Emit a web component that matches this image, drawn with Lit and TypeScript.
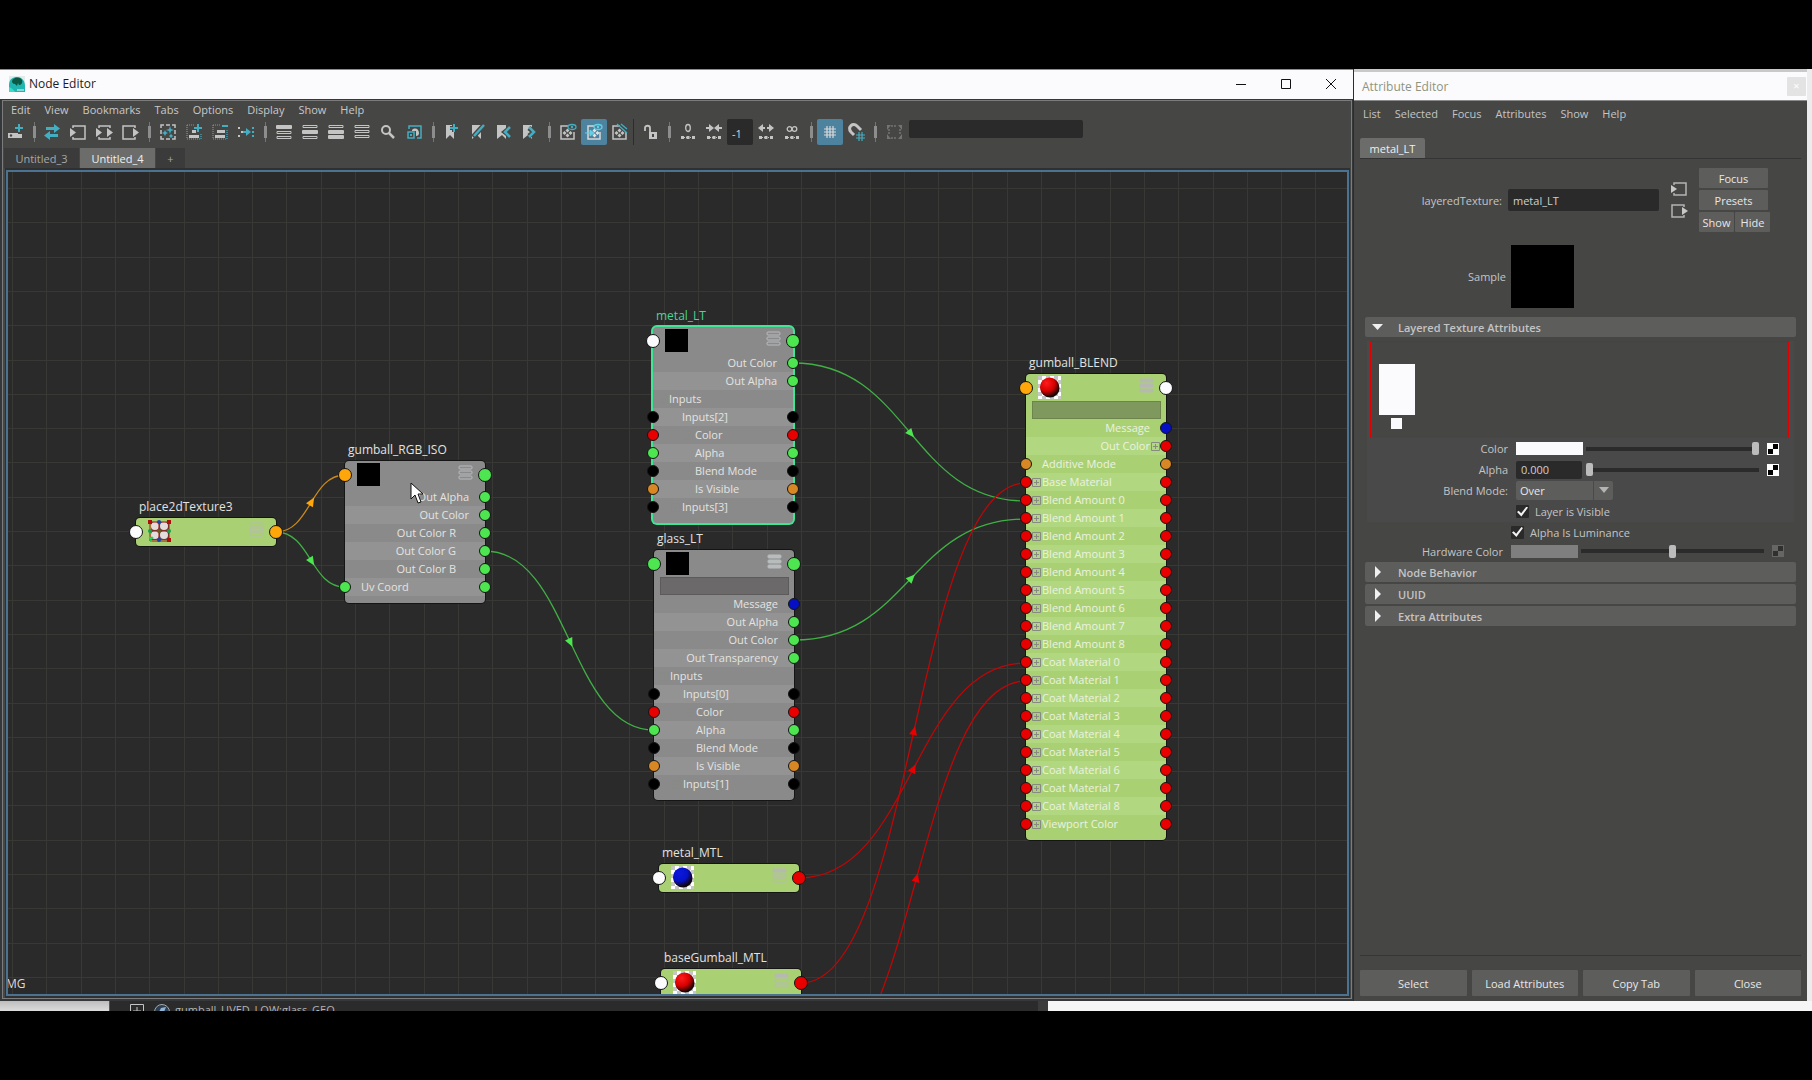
import { LitElement, html, svg, css, nothing } from "lit";
import { customElement, property } from "lit/decorators.js";
import { classMap } from "lit/directives/class-map.js";

type Tone = "green" | "red" | "black" | "blue" | "amber" | "orange" | "white";

interface Row {
  text: string;
  side: "in" | "out";
  depth?: number;
  left?: Tone;
  right?: Tone;
  plus?: boolean;
  faint?: boolean;
}

interface GraphNode {
  name: string;
  x: number;
  y: number;
  kind: "gray" | "lime";
  swatch: "black" | "red" | "blue" | "placement";
  left: Tone;
  right: Tone;
  bars: "open" | "half" | "full" | "dim";
  selected?: boolean;
  filter?: boolean;
  rows: Row[];
}

const layerRows = (first: string, last: string): Row[] => [
  { text: "Inputs", side: "in", plus: true, faint: true },
  { text: first, side: "in", depth: 1, left: "black", right: "black" },
  { text: "Color", side: "in", depth: 2, left: "red", right: "red", plus: true, faint: true },
  { text: "Alpha", side: "in", depth: 2, left: "green", right: "green" },
  { text: "Blend Mode", side: "in", depth: 2, left: "black", right: "black" },
  { text: "Is Visible", side: "in", depth: 2, left: "amber", right: "amber" },
  { text: last, side: "in", depth: 1, left: "black", right: "black", plus: true, faint: true },
];

const redInput = (text: string): Row => ({ text, side: "in", left: "red", right: "red", plus: true });
const nine = [0, 1, 2, 3, 4, 5, 6, 7, 8];

const NODES: GraphNode[] = [
  { name: "place2dTexture3", x: 128, y: 346, kind: "lime", swatch: "placement", left: "white", right: "orange", bars: "dim", rows: [] },
  {
    name: "gumball_RGB_ISO", x: 337, y: 289, kind: "gray", swatch: "black", left: "orange", right: "green", bars: "open",
    rows: [
      { text: "Out Alpha", side: "out", right: "green" },
      { text: "Out Color", side: "out", right: "green" },
      { text: "Out Color R", side: "out", depth: 1, right: "green" },
      { text: "Out Color G", side: "out", depth: 1, right: "green" },
      { text: "Out Color B", side: "out", depth: 1, right: "green" },
      { text: "Uv Coord", side: "in", left: "green", right: "green" },
    ],
  },
  {
    name: "metal_LT", x: 645, y: 155, kind: "gray", swatch: "black", left: "white", right: "green", bars: "open", selected: true,
    rows: [
      { text: "Out Color", side: "out", right: "green", plus: true, faint: true },
      { text: "Out Alpha", side: "out", right: "green" },
      ...layerRows("Inputs[2]", "Inputs[3]"),
    ],
  },
  {
    name: "glass_LT", x: 646, y: 378, kind: "gray", swatch: "black", left: "green", right: "green", bars: "full", filter: true,
    rows: [
      { text: "Message", side: "out", right: "blue" },
      { text: "Out Alpha", side: "out", right: "green" },
      { text: "Out Color", side: "out", right: "green", plus: true, faint: true },
      { text: "Out Transparency", side: "out", right: "green" },
      ...layerRows("Inputs[0]", "Inputs[1]"),
    ],
  },
  {
    name: "gumball_BLEND", x: 1018, y: 202, kind: "lime", swatch: "red", left: "orange", right: "white", bars: "full", filter: true,
    rows: [
      { text: "Message", side: "out", right: "blue" },
      { text: "Out Color", side: "out", right: "red", plus: true },
      { text: "Additive Mode", side: "in", left: "amber", right: "amber" },
      redInput("Base Material"),
      ...nine.map((n) => redInput(`Blend Amount ${n}`)),
      ...nine.map((n) => redInput(`Coat Material ${n}`)),
      redInput("Viewport Color"),
    ],
  },
  { name: "metal_MTL", x: 651, y: 692, kind: "lime", swatch: "blue", left: "white", right: "red", bars: "half", rows: [] },
  { name: "baseGumball_MTL", x: 653, y: 797, kind: "lime", swatch: "red", left: "white", right: "red", bars: "half", rows: [] },
];

const WIRES: { from: [number, number]; to: [number, number]; color: string; head: string }[] = [
  { from: [268, 360], to: [337, 303], color: "#c98a1e", head: "#ffa60a" },
  { from: [268, 360], to: [337, 415], color: "#40b044", head: "#4de651" },
  { from: [477, 379], to: [646, 558], color: "#40b044", head: "#4de651" },
  { from: [785, 191], to: [1018, 329], color: "#40b044", head: "#4de651" },
  { from: [786, 468], to: [1018, 347], color: "#40b044", head: "#4de651" },
  { from: [791, 706], to: [1018, 491], color: "#c00606", head: "#e80000" },
  { from: [793, 811], to: [1018, 311], color: "#c00606", head: "#e80000" },
  { from: [798, 907], to: [1018, 509], color: "#c00606", head: "#e80000" },
];

const G = "#c4c4c4";
const T = "#43adc2";

const ICONS: Record<string, unknown> = {
  create: svg`<path d="M0 9h10v5H0z" fill=${G}/><path d="M10 10h4v4h-4z" fill=${G}/><circle cx="3" cy="11.500" r="1.200" fill="#444"/><path d="M11 0v8M7 4h8" stroke=${T} stroke-width="2"/>`,
  swap: svg`<path d="M2 4.500h9M5 11.500h9" stroke=${T} stroke-width="3"/><path d="M10 0l6 4.500-6 4.500zM6 7l-6 4.500L6 16z" fill=${T}/>`,
  input: svg`<path d="M3 4V2h12v13H3v-2" fill="none" stroke=${G} stroke-width="1.500"/><path d="M0 4l6 4.500L0 13z" fill=${G}/>`,
  both: svg`<path d="M3 4V2h11v2M3 13v2h11v-2" fill="none" stroke=${G} stroke-width="1.500"/><path d="M0 4l6 4.500L0 13zM11 4l6 4.500L11 13z" fill=${G}/>`,
  output: svg`<path d="M13 4V2H1v13h12v-2" fill="none" stroke=${G} stroke-width="1.500"/><path d="M11 4l6 4.500L11 13z" fill=${G}/>`,
  layout: svg`<path d="M1 4V1h3M6 1h4M12 1h3v3M15 6v4M15 12v3h-3M10 15H6M4 15H1v-3M1 10V6" fill="none" stroke=${G} stroke-width="1.500"/><path d="M10 2l1 3 3 1-3 1-1 3-1-3-3-1 3-1zM5 6l1 2 2 1-2 1-1 2-1-2-2-1 2-1zM11 10l1 1 1 1-1 1-1 1-1-1-1-1 1-1z" fill=${T}/>`,
  addsel: svg`<path d="M1 1h8M1 1v14h14V9" fill="none" stroke=${T} stroke-width="1.200" stroke-dasharray="1 1"/><path d="M6 6h4v3H6zM3 11h10v3H3z" fill=${G}/><path d="M12 0v8M8 4h8" stroke=${T} stroke-width="2"/>`,
  remsel: svg`<path d="M1 1h8M1 1v14h14V5" fill="none" stroke=${T} stroke-width="1.200" stroke-dasharray="1 1"/><path d="M5 6h8v3H5zM3 11h10v3H3z" fill=${G}/><path d="M10 2h6" stroke=${T} stroke-width="2"/>`,
  arrange: svg`<path d="M0 3h2v2H0zM0 11h2v2H0zM3 7h2v2H3z" fill=${G}/><path d="M5 8h6" stroke=${T} stroke-width="2"/><path d="M8 4l5 4-5 4zM14 3h2v2h-2zM14 7h2v2h-2zM14 11h2v2h-2z" fill=${T}/>`,
  list1: svg`<rect width="16" height="4" y="1" rx="1" fill=${G}/><path d="M1 7.500h14v2H1zM1 12.500h14v2H1z" fill="none" stroke=${G}/>`,
  list2: svg`<path d="M1 1.500h14v2H1z" fill="none" stroke=${G}/><rect width="16" height="4" y="6" rx="1" fill=${G}/><path d="M1 12.500h14v2H1z" fill="none" stroke=${G}/>`,
  list3: svg`<path d="M1 1.500h14v2H1z" fill="none" stroke=${G}/><rect width="16" height="4" y="6" rx="1" fill=${G}/><rect width="16" height="4" y="11" rx="1" fill=${G}/>`,
  list4: svg`<path d="M1 1.500h14v2H1zM1 6.500h14v2H1zM1 11.500h14v2H1z" fill="none" stroke=${G}/>`,
  search: svg`<circle cx="6" cy="6" r="4" fill="none" stroke=${G} stroke-width="2"/><path d="M9 9l5 5" stroke=${G} stroke-width="2.500"/>`,
  swatch: svg`<path d="M3 5V2h12v12h-4" fill="none" stroke=${T} stroke-width="1.500"/><path d="M2 8h6v6H2z" fill="none" stroke=${T} stroke-width="1.500"/><path d="M4 10h2v2H4z" fill=${T}/><path d="M6 6c3-3 7-1 7 3 0 2-1 3-3 3V7H6z" fill=${G}/>`,
  bmadd: svg`<path d="M2 1h8v14l-4-4-4 4z" fill=${G}/><path d="M10 0v8M6 4h8" stroke="#464645" stroke-width="4"/><path d="M10 0v8M6 4h8" stroke=${T} stroke-width="2"/>`,
  bmedit: svg`<path d="M2 1h9v14l-4-4-5 4z" fill=${G}/><path d="M3 13L14 1" stroke="#464645" stroke-width="5"/><path d="M4 12L14 1" stroke=${T} stroke-width="2.500"/>`,
  bmprev: svg`<path d="M1 1h9v14l-4-4-5 4z" fill=${G}/><path d="M14 4l-5 4 5 4" fill="none" stroke="#464645" stroke-width="5"/><path d="M14 3L9 8l5 5" fill="none" stroke=${T} stroke-width="2.500"/>`,
  bmnext: svg`<path d="M1 1h9v14l-4-4-5 4z" fill=${G}/><path d="M7 4l5 4-5 4" fill="none" stroke="#464645" stroke-width="5"/><path d="M7 3l5 5-5 5" fill="none" stroke=${T} stroke-width="2.500"/>`,
  view1: svg`<path d="M8 2H1v13h13V8" fill="none" stroke=${G} stroke-width="1.500"/><path d="M7.500 4.500l2 2-2 2-2-2zM7.500 9.500l2 2-2 2-2-2zM4.500 7l2 2-2 2-2-2zM10.500 7l2 2-2 2-2-2z" fill=${G}/><ellipse cx="12" cy="3" rx="4" ry="2.500" fill="#464645" stroke=${T} stroke-width="1.300"/><circle cx="12" cy="3" r="1.200" fill=${T}/>`,
  view2: svg`<path d="M8 2H2v13h12V8" fill="none" stroke="#d8d8d8" stroke-width="1.500"/><path d="M8.500 4.500l2 2-2 2-2-2zM8.500 9.500l2 2-2 2-2-2zM11.500 7l2 2-2 2-2-2z" fill="#e4e4e4"/><ellipse cx="12" cy="3" rx="4" ry="2.500" fill="#4e83a0" stroke="#65d0e4" stroke-width="1.300"/><circle cx="12" cy="3" r="1.200" fill="#65d0e4"/><path d="M-1 9h6M4 6l4 3-4 3z" fill="#65d0e4" stroke="#65d0e4"/>`,
  view3: svg`<path d="M8 2H1v13h13V8" fill="none" stroke=${G} stroke-width="1.500"/><path d="M7.500 4.500l2 2-2 2-2-2zM7.500 9.500l2 2-2 2-2-2zM4.500 7l2 2-2 2-2-2zM10.500 7l2 2-2 2-2-2z" fill=${G}/><path d="M5 0l10 9M9 0l6 5" stroke=${T} stroke-width="1.300"/>`,
  unlock: svg`<path d="M7 8h8v7H7z" fill=${G}/><path d="M10 10h2v3h-2z" fill="#444"/><path d="M3 7V4c0-3 5-3 5 0v4" fill="none" stroke=${G} stroke-width="1.800"/>`,
  zero: svg`<ellipse cx="8" cy="4" rx="2.300" ry="3.500" fill="none" stroke=${G} stroke-width="1.300"/><path d="M1 12h3v3H1zM6.500 12h3v3h-3zM12 12h3v3h-3z" fill=${G}/><path d="M2 13.500h12" stroke=${G} stroke-dasharray="1 1"/>`,
  less: svg`<path d="M0 4h5M11 4h5" stroke=${G} stroke-width="2"/><path d="M3 0l5 4-5 4zM13 0L8 4l5 4z" fill=${G}/><path d="M1 12h3v3H1zM6.500 12h3v3h-3zM12 12h3v3h-3z" fill=${G}/><path d="M2 13.500h12" stroke=${G} stroke-dasharray="1 1"/>`,
  more: svg`<path d="M3 4h4M9 4h4" stroke=${G} stroke-width="2"/><path d="M11 0l5 4-5 4zM5 0L0 4l5 4z" fill=${G}/><path d="M1 12h3v3H1zM6.500 12h3v3h-3zM12 12h3v3h-3z" fill=${G}/><path d="M2 13.500h12" stroke=${G} stroke-dasharray="1 1"/>`,
  infinite: svg`<circle cx="5.500" cy="5" r="2.300" fill="none" stroke=${G} stroke-width="1.300"/><circle cx="10.500" cy="5" r="2.300" fill="none" stroke=${G} stroke-width="1.300"/><path d="M1 12h3v3H1zM6.500 12h3v3h-3zM12 12h3v3h-3z" fill=${G}/><path d="M2 13.500h12" stroke=${G} stroke-dasharray="1 1"/>`,
  grid: svg`<path d="M5 2v12M8 2v12M11 2v12M2 5h12M2 8h12M2 11h12" stroke="#dadada" stroke-width="1.200"/>`,
  snap: svg`<path d="M3 8C-1 3 5-2 9 2l4 4M3 8l3 3" fill="none" stroke=${G} stroke-width="3"/><path d="M11 8v9M14 8v9M8 11h9M8 14h9" stroke="#464645" stroke-width="3"/><path d="M11 8v9M14 8v9M8 11h9M8 14h9" stroke=${T} stroke-width="1.200"/>`,
  frame: svg`<path d="M5 2h6M5 14h6M3 5v6M14 5v6" stroke="#747474" stroke-width="1.500" stroke-dasharray="2 1"/><path d="M1 1h4L1 6zM16 1h-4l4 5zM1 15h4l-4-5zM16 15h-4l4-5z" fill="#747474"/>`,
};

const TOOLS: string[] = [
  "create", "|", "swap", "input", "both", "output", "|", "layout", "addsel", "remsel", "arrange", "|",
  "list1", "list2", "list3", "list4", "search", "swatch", "|", "bmadd", "bmedit", "bmprev", "bmnext", "|",
  "view1", "view2*", "view3", "/", "unlock", "|", "zero", "less", "#", "more", "infinite", "|",
  "grid*", "snap", "|", "frame",
];

const shared = css`
  * { box-sizing: border-box; }
  button, input, select { font: inherit; color: inherit; margin: 0; }
  button { border: 0; padding: 0; background: none; }
  svg { display: block; overflow: visible; }
  .menu { display: flex; align-items: center; gap: 14px; }
  .menu button { line-height: 18px; }
  ul { list-style: none; margin: 0; padding: 0; }
`;

@customElement("graph-node")
export class GraphNodeElement extends LitElement {
  @property({ attribute: false }) node!: GraphNode;

  static styles = [shared, css`
    :host { display: block; width: 140px; font-size: 11px; }
    .name { position: absolute; left: 3px; top: -20px; font-size: 12px; line-height: 18px; color: #e2e2e0; white-space: nowrap; }
    .body { position: relative; border-radius: 4px; box-shadow: 0 0 0 1px #151515; padding-bottom: 7px; }
    .body.compact { padding-bottom: 1px; }
    .gray { background: #8a8a8b; color: #e4e4e0; }
    .lime { background: #a9d174; color: #ecf2e0; }
    .selected .body { box-shadow: 0 0 0 2px #3fe695; }
    .selected .name { color: #4fd295; }
    .head { position: relative; height: 27px; display: flex; align-items: flex-start; justify-content: space-between; padding: 2px 12px; }
    .swatch { width: 23px; height: 23px; }
    .bars { margin-top: 2px; }
    .filter { display: block; width: 129px; height: 18px; margin: 0 0 0 6px; padding: 0 4px; border: 1px solid #5c5a5b; background: #6c696a; }
    .lime .filter { border-color: #6d854c; background: #7f985e; }
    .row { position: relative; height: 18px; line-height: 18px; padding: 0 16px; display: flex; white-space: nowrap; }
    .row:nth-child(even) { background: #939394; }
    .lime .row:nth-child(even) { background: #b1d880; }
    .out { justify-content: flex-end; }
    .out.d1 { padding-right: 29px; }
    .in.d1 { padding-left: 29px; }
    .in.d2 { padding-left: 42px; }
    .port { position: absolute; top: 3px; width: 12px; height: 12px; border-radius: 50%; border: 1px solid #141414; }
    .port.l { left: -6px; }
    .port.r { right: -6px; }
    .head .port { top: 7px; width: 14px; height: 14px; }
    .head .port.l { left: -7px; }
    .head .port.r { right: -7px; }
    .green { background: #4de651; }
    .red { background: #e80000; }
    .black { background: #000; }
    .blue { background: #0510c4; }
    .amber { background: #d78724; }
    .orange { background: #ffa60a; }
    .white { background: #fcfcff; }
    .plus { position: absolute; top: 5px; left: 6px; color: #868a80; }
    .d1 .plus { left: 18px; }
    .d2 .plus { left: 31px; }
    .out .plus { left: auto; right: 6px; }
    .faint { opacity: 0.35; }
  `];

  private swatch(kind: GraphNode["swatch"]) {
    if (kind === "black") return svg`<rect width="23" height="23" fill="#000"/>`;
    if (kind === "placement") {
      return svg`
        <rect x="3" y="2" width="18" height="18" fill="#5a4a44"/>
        ${[[7, 6], [16, 6], [7, 15], [16, 15]].map(([x, y]) => svg`<circle cx=${x} cy=${y} r="4" fill="#e2dcdc"/>`)}
        <path d="M2 2h19v19H2zM11 2v19M2 11h19" fill="none" stroke="#a31515" stroke-width="1"/>
        ${[[2, 2], [21, 2], [21, 20]].map(([x, y]) => svg`<rect x=${x - 2} y=${y - 2} width="4" height="4" fill="#b00d0d"/>`)}
        <circle cx="11" cy="2" r="2" fill="#1d43a8"/><circle cx="11" cy="20" r="2" fill="#1d43a8"/>
        <circle cx="2" cy="11" r="2" fill="#19a045"/><circle cx="21" cy="11" r="2" fill="#19a045"/>
        <circle cx="11" cy="11" r="2" fill="#6d5a1c"/>
        <path d="M1 17l2 2 2-2M3 18v4" fill="none" stroke="#19e05a" stroke-width="1.500"/>`;
    }
    const id = `ball-${kind}`;
    const [hi, mid] = kind === "red" ? ["#ff1c1c", "#d80000"] : ["#0a18e0", "#0612c6"];
    return svg`
      <defs>
        <radialGradient id=${id} cx="0.350" cy="0.300" r="0.750">
          <stop offset="0" stop-color=${hi}/><stop offset="0.550" stop-color=${mid}/><stop offset="1" stop-color="#140000"/>
        </radialGradient>
        <pattern id="chk" width="8" height="8" patternUnits="userSpaceOnUse">
          <rect width="8" height="8" fill="#fff"/><path d="M0 0h4v4H0zM4 4h4v4H4z" fill="#c6c6c6"/>
        </pattern>
      </defs>
      <rect width="23" height="23" fill="url(#chk)"/>
      <circle cx="12" cy="12" r="9.500" fill="#0a0a0a"/>
      <circle cx="11.500" cy="11" r="9.500" fill=${`url(#${id})`}/>`;
  }

  private bars(kind: GraphNode["bars"]) {
    const fill = kind === "full" ? [1, 1, 1] : kind === "half" ? [1, 0, 0] : [0, 0, 0];
    const color = this.node.kind === "lime" ? "#b6b9b0" : "#b9bcbd";
    return svg`${[0, 1, 2].map((i) => svg`
      <rect x="1" y=${1 + i * 5} width="13" height="3" rx="1" fill=${fill[i] ? color : "none"} stroke=${color} stroke-width="1"/>`)}`;
  }

  render() {
    const n = this.node;
    return html`
      <section class=${classMap({ selected: !!n.selected })}>
        <div class="name">${n.name}</div>
        <div class=${classMap({ body: true, [n.kind]: true, compact: !n.rows.length })}>
          <div class="head">
            <i class="port l ${n.left}"></i>
            <svg class="swatch" width="23" height="23" viewBox="0 0 23 23">${this.swatch(n.swatch)}</svg>
            <svg class="bars" width="15" height="15" viewBox="0 0 15 15">${this.bars(n.bars)}</svg>
            <i class="port r ${n.right}"></i>
          </div>
          ${n.filter ? html`<input class="filter" aria-label="Filter attributes of ${n.name}" />` : nothing}
          <ul>
            ${n.rows.map((r) => html`
              <li class="row ${r.side} d${r.depth ?? 0}">
                ${r.left ? html`<i class="port l ${r.left}"></i>` : nothing}
                ${r.plus ? html`<svg class="plus ${r.faint ? "faint" : ""}" width="9" height="9" viewBox="0 0 9 9">
                  <path d="M0.500 0.500h8v8h-8zM4.500 2v5M2 4.500h5" fill="none" stroke="currentColor"/></svg>` : nothing}
                <span>${r.text}</span>
                ${r.right ? html`<i class="port r ${r.right}"></i>` : nothing}
              </li>`)}
          </ul>
        </div>
      </section>`;
  }
}

@customElement("node-editor")
export class NodeEditor extends LitElement {
  static styles = [shared, css`
    :host { display: flex; flex-direction: column; min-width: 0; background: #35383b; color: #c8c8c8; font-size: 11px; }
    .title { display: flex; align-items: center; height: 30px; border-top: 1px solid #8c8c8c; background: #fbfbfd; color: #1c1c1c; padding: 0 0 2px 9px; font-size: 12px; }
    .title h1 { flex: 1; margin: 0 0 0 4px; font-size: 12px; font-weight: 400; }
    .title button { width: 45px; height: 27px; display: grid; place-items: center; }
    .frame { flex: 1; display: flex; flex-direction: column; margin: 1px 1px 2px 2px; border: 1px solid #7c7c7c; background: #464645; min-height: 0; }
    .menu { height: 18px; padding-left: 8px; }
    .tools { display: flex; align-items: center; height: 26px; }
    .tool { width: 26px; height: 26px; display: grid; place-items: center; border-radius: 2px; flex: none; }
    .on { background: #4e83a0; }
    .sep { flex: none; width: 12px; height: 20px; display: grid; place-items: center; }
    .sep:first-of-type { width: 10px; }
    .sep::before { content: ""; width: 1px; height: 20px; background: #757575; grid-area: 1 / 1; }
    .sep::after { content: ""; width: 3px; height: 12px; background: #8d8d8d; grid-area: 1 / 1; }
    .thin { flex: none; width: 4px; height: 26px; border-left: 1px solid #2d2d2d; }
    .depth { width: 26px; height: 26px; border: 0; border-radius: 2px; background: #2a2a2b; color: #d8d8d8; padding: 2px 0 0 5px; }
    .find { width: 174px; height: 18px; border: 0; border-radius: 2px; background: #2a2a2b; align-self: flex-start; margin: 1px 0 0 2px; }
    .tabs { display: flex; height: 20px; margin: 3px 0 0 1px; gap: 1px; }
    .tab { width: 75px; height: 20px; background: #3b3b3b; color: #a8a8a8; }
    .tab.active { background: #6c6c6a; color: #f0f0f0; }
    .tab.add { width: 29px; }
    .well { flex: 1; display: flex; min-height: 0; margin: 0 1px 0 2px; padding: 2px 1px; background: #303030; }
    .canvas { position: relative; flex: 1; overflow: hidden; border: 2px solid #4b7391; background: #2a2a2b; }
    .wires { position: absolute; inset: 0; width: 100%; height: 100%; }
    graph-node { position: absolute; }
    .stray { position: absolute; left: -2px; bottom: 1px; font-size: 12px; line-height: 18px; color: #dcdcdc; }
    .cursor { position: absolute; left: 402px; top: 310px; }
  `];

  private wire(w: (typeof WIRES)[number]) {
    const [x0, y0] = w.from;
    const [x1, y1] = w.to;
    const mx = (x0 + x1) / 2;
    const my = (y0 + y1) / 2;
    const angle = (Math.atan2(2 * (y1 - y0), x1 - x0) * 180) / Math.PI;
    return svg`
      <path d=${`M${x0} ${y0}C${mx} ${y0} ${mx} ${y1} ${x1} ${y1}`} fill="none" stroke=${w.color} stroke-width="1.300"/>
      <path d="M7 0L-2 -4v8z" fill=${w.head} transform=${`translate(${mx} ${my}) rotate(${angle})`}/>`;
  }

  private tool(id: string) {
    if (id === "|") return html`<i class="sep"></i>`;
    if (id === "/") return html`<i class="thin"></i>`;
    if (id === "#") return html`<input class="depth" aria-label="Traversal depth" .value=${"-1"} />`;
    const on = id.endsWith("*");
    const key = on ? id.slice(0, -1) : id;
    return html`<button class=${classMap({ tool: true, on })} aria-label=${key} aria-pressed=${on ? "true" : "false"}>
      <svg width="16" height="16" viewBox="0 0 16 16">${ICONS[key]}</svg>
    </button>`;
  }

  render() {
    const steps = [0, 1, 2, 3, 4, 5, 6, 7, 8, 9].map((i) => Math.round(i * 34.3));
    return html`
      <header class="title">
        <svg width="16" height="16" viewBox="0 0 16 16">
          <rect width="16" height="16" fill="#dfeceb"/>
          <path d="M0 16V9c0-6 4-8 8-8s8 3 8 9v6z" fill="#20b5b0"/>
          <path d="M3 5c1-4 8-5 10-1 1 3-1 5-3 5L9 7 8 10 6 8C4 8 3 7 3 5z" fill="#0c5a45"/>
          <path d="M0 11c3 1 5 3 6 5H0z" fill="#36dccb"/><path d="M8 14h7" stroke="#e6ffff"/>
        </svg>
        <h1>Node Editor</h1>
        <button aria-label="Minimize"><svg width="10" height="10"><path d="M0 5.500h10" stroke="#111"/></svg></button>
        <button aria-label="Maximize"><svg width="10" height="10"><path d="M0.500 0.500h9v9h-9z" fill="none" stroke="#111"/></svg></button>
        <button aria-label="Close"><svg width="10" height="10"><path d="M0 0l10 10M10 0L0 10" stroke="#111"/></svg></button>
      </header>
      <div class="frame">
        <nav class="menu">
          ${["Edit", "View", "Bookmarks", "Tabs", "Options", "Display", "Show", "Help"].map((m) => html`<button>${m}</button>`)}
        </nav>
        <div class="tools">
          ${TOOLS.map((t) => this.tool(t))}
          <input class="find" aria-label="Find node" />
        </div>
        <div class="tabs">
          <button class="tab">Untitled_3</button>
          <button class="tab active">Untitled_4</button>
          <button class="tab add" aria-label="New tab">+</button>
        </div>
        <div class="well">
          <div class="canvas">
            <svg class="wires">
              <defs>
                <pattern id="mesh" x="4" y="16" width="343" height="343" patternUnits="userSpaceOnUse">
                  ${steps.map((s) => svg`<rect x=${s} y="0" width="1" height="343" fill="#383835"/><rect x="0" y=${s} width="343" height="1" fill="#383835"/>`)}
                </pattern>
              </defs>
              <rect width="100%" height="100%" fill="url(#mesh)"/>
              ${WIRES.map((w) => this.wire(w))}
            </svg>
            ${NODES.map((n) => html`<graph-node style="left:${n.x}px;top:${n.y}px" .node=${n}></graph-node>`)}
            <span class="stray">MG</span>
            <svg class="cursor" width="14" height="22" viewBox="0 0 14 22">
              <path d="M1 1v16l4-4 3 8 3-1-3-8h5z" fill="#fff" stroke="#111"/>
            </svg>
          </div>
        </div>
      </div>`;
  }
}

const portIcon = (dir: "in" | "out") => html`
  <svg width="18" height="14" viewBox="0 0 18 14">
    ${dir === "in"
      ? svg`<path d="M3 3V1h12v12H3v-2" fill="none" stroke="#b4b4b4" stroke-width="1.500"/><path d="M0 3l6 4-6 4z" fill="#c8c8c8"/>`
      : svg`<path d="M13 3V1H1v12h12v-2" fill="none" stroke="#b4b4b4" stroke-width="1.500"/><path d="M11 3l6 4-6 4z" fill="#c8c8c8"/>`}
  </svg>`;

@customElement("attribute-editor")
export class AttributeEditor extends LitElement {
  static styles = [shared, css`
    :host { display: flex; flex-direction: column; background: #464645; color: #c4c4c4; font-size: 11px; }
    .title { display: flex; align-items: center; justify-content: space-between; height: 32px; border-top: 3px solid #c9c9c9; border-bottom: 1px solid #8a8a8a; background: #fbfbfd; padding: 0 1px 0 8px; color: #8e9480; }
    .title h1 { margin: 0; font-size: 12px; font-weight: 400; }
    .x { width: 19px; height: 19px; background: #e3e3e3; color: #fff; border-radius: 1px; line-height: 18px; }
    .menu { height: 25px; padding-left: 9px; }
    .tabs { margin: 12px 6px 0; border-bottom: 1px solid #343434; display: flex; height: 21px; }
    .tab { width: 65px; height: 20px; background: #6c6c6a; color: #f0f0f0; border-radius: 2px 2px 0 0; }
    .field { background: #2a2a2b; border: 0; border-radius: 2px; color: #cfcfcf; padding: 1px 5px; }
    .name { display: grid; grid-template-columns: 148px 151px 24px auto 1fr; column-gap: 6px; margin-top: 9px; align-items: center; }
    .name label { text-align: right; }
    .name .field { width: 151px; height: 22px; }
    .name .io { display: grid; gap: 8px; margin-left: 6px; }
    .push { display: grid; grid-template-columns: 35px 35px; gap: 2px 1px; margin-left: 4px; }
    .push button, .foot button { background: #5d5d5c; color: #e8e8e8; height: 20px; border-radius: 1px; }
    .push .wide { grid-column: 1 / 3; margin-right: 2px; }
    .sample { display: grid; grid-template-columns: 152px 63px; gap: 5px; align-items: center; margin-top: 13px; }
    .sample span { text-align: right; }
    .sample i { height: 63px; background: #000; }
    .sections { margin: 9px 11px 0; display: flex; flex-direction: column; gap: 2px; }
    .head { display: flex; align-items: center; gap: 15px; width: 100%; height: 20px; padding-left: 7px; background: #5d5d5c; color: #c4c4c4; font-weight: 600; border-radius: 2px; }
    .tri { width: 11px; height: 12px; }
    .panel { background: #49494a; margin: 4px 2px 0; }
    .layers { height: 97px; margin: 0 5px 0 3px; border: 1px solid #e00000; border-bottom: 0; background: #464645; padding: 22px 0 0 8px; }
    .layers .card { width: 36px; height: 51px; background: #fbfbfd; }
    .layers .knob { width: 11px; height: 11px; background: #fbfbfd; margin: 3px 0 0 12px; }
    .row { display: grid; grid-template-columns: 141px 67px 168px 12px; column-gap: 8px; align-items: center; height: 21px; }
    .row.outer { grid-template-columns: 138px 67px 178px 12px; height: 18px; }
    .row label { text-align: right; }
    .row .swatch { height: 13px; margin: 0; background: #fbfbfd; border: 0; padding: 0; }
    .row .gray { background: #7f7f7f; }
    .row .slider { margin-left: -5px; }
    .row .field { width: 66px; height: 18px; }
    .slider { appearance: none; height: 13px; background: linear-gradient(#2b2b2b, #2b2b2b) center / 100% 4px no-repeat; }
    .slider::-webkit-slider-thumb { appearance: none; width: 7px; height: 13px; border-radius: 2px; background: #bcbcbc; }
    .pick { position: relative; width: 97px; height: 19px; }
    .pick select { appearance: none; width: 97px; height: 19px; border: 0; border-radius: 2px; background: #5d5d5c; color: #e8e8e8; padding: 0 4px; }
    .pick svg { position: absolute; right: 4px; top: 6px; pointer-events: none; }
    .pick::after { content: ""; position: absolute; right: 19px; top: 0; width: 1px; height: 19px; background: #4a4a4a; }
    .check { display: flex; align-items: center; gap: 6px; height: 21px; padding-left: 149px; }
    .check.outer { padding-left: 146px; height: 20px; }
    .check input { appearance: none; width: 13px; height: 13px; background: #2a2a2b; border-radius: 1px; display: grid; place-items: center; }
    .check input:checked::before { content: ""; width: 11px; height: 10px; background: #f2f2f2; clip-path: polygon(0 55%, 15% 42%, 38% 68%, 86% 0, 100% 10%, 40% 100%); }
    .dim { opacity: 0.3; }
    .group { display: flex; flex-direction: column; }
    .foot { margin: auto 6px 5px; border-top: 1px solid #363636; padding-top: 14px; display: grid; grid-template-columns: repeat(4, 1fr); gap: 5px; }
    .foot button { height: 26px; }
  `];

  private tri(open: boolean) {
    return html`<svg class="tri" viewBox="0 0 11 12"><path d=${open ? "M0 3h11L5.500 9z" : "M3 0l6 6-6 6z"} fill="#f0f0f0"/></svg>`;
  }

  private map(dim = false) {
    return html`<svg class=${dim ? "dim" : ""} width="12" height="12" viewBox="0 0 12 12">
      <rect width="12" height="12" fill=${dim ? "#b0b0b0" : "#fff"}/><path d="M6 1h5v5H6zM1 6h5v5H1z" fill="#000"/></svg>`;
  }

  render() {
    return html`
      <header class="title"><h1>Attribute Editor</h1><button class="x" aria-label="Close panel">×</button></header>
      <nav class="menu">
        ${["List", "Selected", "Focus", "Attributes", "Show", "Help"].map((m) => html`<button>${m}</button>`)}
      </nav>
      <div class="tabs"><button class="tab">metal_LT</button></div>
      <div class="name">
        <label for="nodeName">layeredTexture:</label>
        <input id="nodeName" class="field" .value=${"metal_LT"} />
        <div class="io">${portIcon("in")}${portIcon("out")}</div>
        <div class="push">
          <button class="wide">Focus</button>
          <button class="wide">Presets</button>
          <button>Show</button>
          <button>Hide</button>
        </div>
      </div>
      <div class="sample"><span>Sample</span><i></i></div>
      <div class="sections">
        <div class="group">
          <button class="head" aria-expanded="true">${this.tri(true)}Layered Texture Attributes</button>
          <div class="panel">
            <div class="layers"><div class="card"></div><div class="knob"></div></div>
            <div class="row">
              <label for="color">Color</label>
              <i class="swatch"></i>
              <input id="color" class="slider" type="range" min="0" max="100" .value=${"100"} />
              ${this.map()}
            </div>
            <div class="row">
              <label for="alpha">Alpha</label>
              <input id="alpha" class="field" .value=${"0.000"} />
              <input class="slider" aria-label="Alpha amount" type="range" min="0" max="100" .value=${"0"} />
              ${this.map()}
            </div>
            <div class="row">
              <label for="mode">Blend Mode:</label>
              <div class="pick">
                <select id="mode"><option>Over</option></select>
                <svg width="10" height="6" viewBox="0 0 10 6"><path d="M0 0h10L5 6z" fill="#b4b4b4"/></svg>
              </div>
            </div>
            <div class="check"><input id="visible" type="checkbox" checked /><label for="visible">Layer is Visible</label></div>
          </div>
          <div class="check outer"><input id="lum" type="checkbox" checked /><label for="lum">Alpha Is Luminance</label></div>
          <div class="row outer">
            <label for="hw">Hardware Color</label>
            <i class="swatch gray"></i>
            <input id="hw" class="slider" type="range" min="0" max="100" .value=${"50"} />
            ${this.map(true)}
          </div>
        </div>
        <button class="head" aria-expanded="false">${this.tri(false)}Node Behavior</button>
        <button class="head" aria-expanded="false">${this.tri(false)}UUID</button>
        <button class="head" aria-expanded="false">${this.tri(false)}Extra Attributes</button>
      </div>
      <footer class="foot">
        ${["Select", "Load Attributes", "Copy Tab", "Close"].map((b) => html`<button>${b}</button>`)}
      </footer>`;
  }
}

@customElement("app-root")
export class AppRoot extends LitElement {
  static styles = [shared, css`
    :host { display: block; background: #000; font-family: "Open Sans", "Noto Sans", sans-serif; }
    .page { min-height: 100vh; display: flex; flex-direction: column; padding: 69px 0; }
    .desk { flex: 1; display: grid; grid-template-columns: minmax(0, 1fr) 454px 5px; background: #f4f4f5; }
    attribute-editor { border-left: 1px solid #2c2c2c; }
    .edge { background: #ececed; }
    .behind { display: flex; height: 10px; overflow: hidden; background: #f6f6f7; color: #b4b4b4; font-size: 11px; }
    .pale { flex: none; width: 110px; background: linear-gradient(#bdbdbd, #dcdcdc); border-right: 1px solid #555; }
    .outliner { flex: none; width: 52%; max-width: 938px; background: #2b2b2b; border-right: 10px solid #3b3b3b; display: flex; gap: 10px; padding: 3px 0 0 20px; }
    .outliner span { line-height: 12px; margin-left: -5px; }
  `];

  render() {
    return html`
      <main class="page">
        <div class="desk">
          <node-editor></node-editor>
          <attribute-editor></attribute-editor>
          <div class="edge"></div>
        </div>
        <div class="behind">
          <div class="pale"></div>
          <div class="outliner">
            <svg width="14" height="14" viewBox="0 0 14 14"><path d="M0.500 0.500h13v13H0.500zM7 3v8M3 7h8" fill="none" stroke="#c4c4c4"/></svg>
            <svg width="16" height="16" viewBox="0 0 16 16"><circle cx="8" cy="8" r="7.500" fill="#2c3f52" stroke="#a8a8a8"/><path d="M7 4l5-1-2 5-6 2z" fill="#8fb4d4"/></svg>
            <span>gumball_UVED_LOW:glass_GEO</span>
          </div>
        </div>
      </main>`;
  }
}
